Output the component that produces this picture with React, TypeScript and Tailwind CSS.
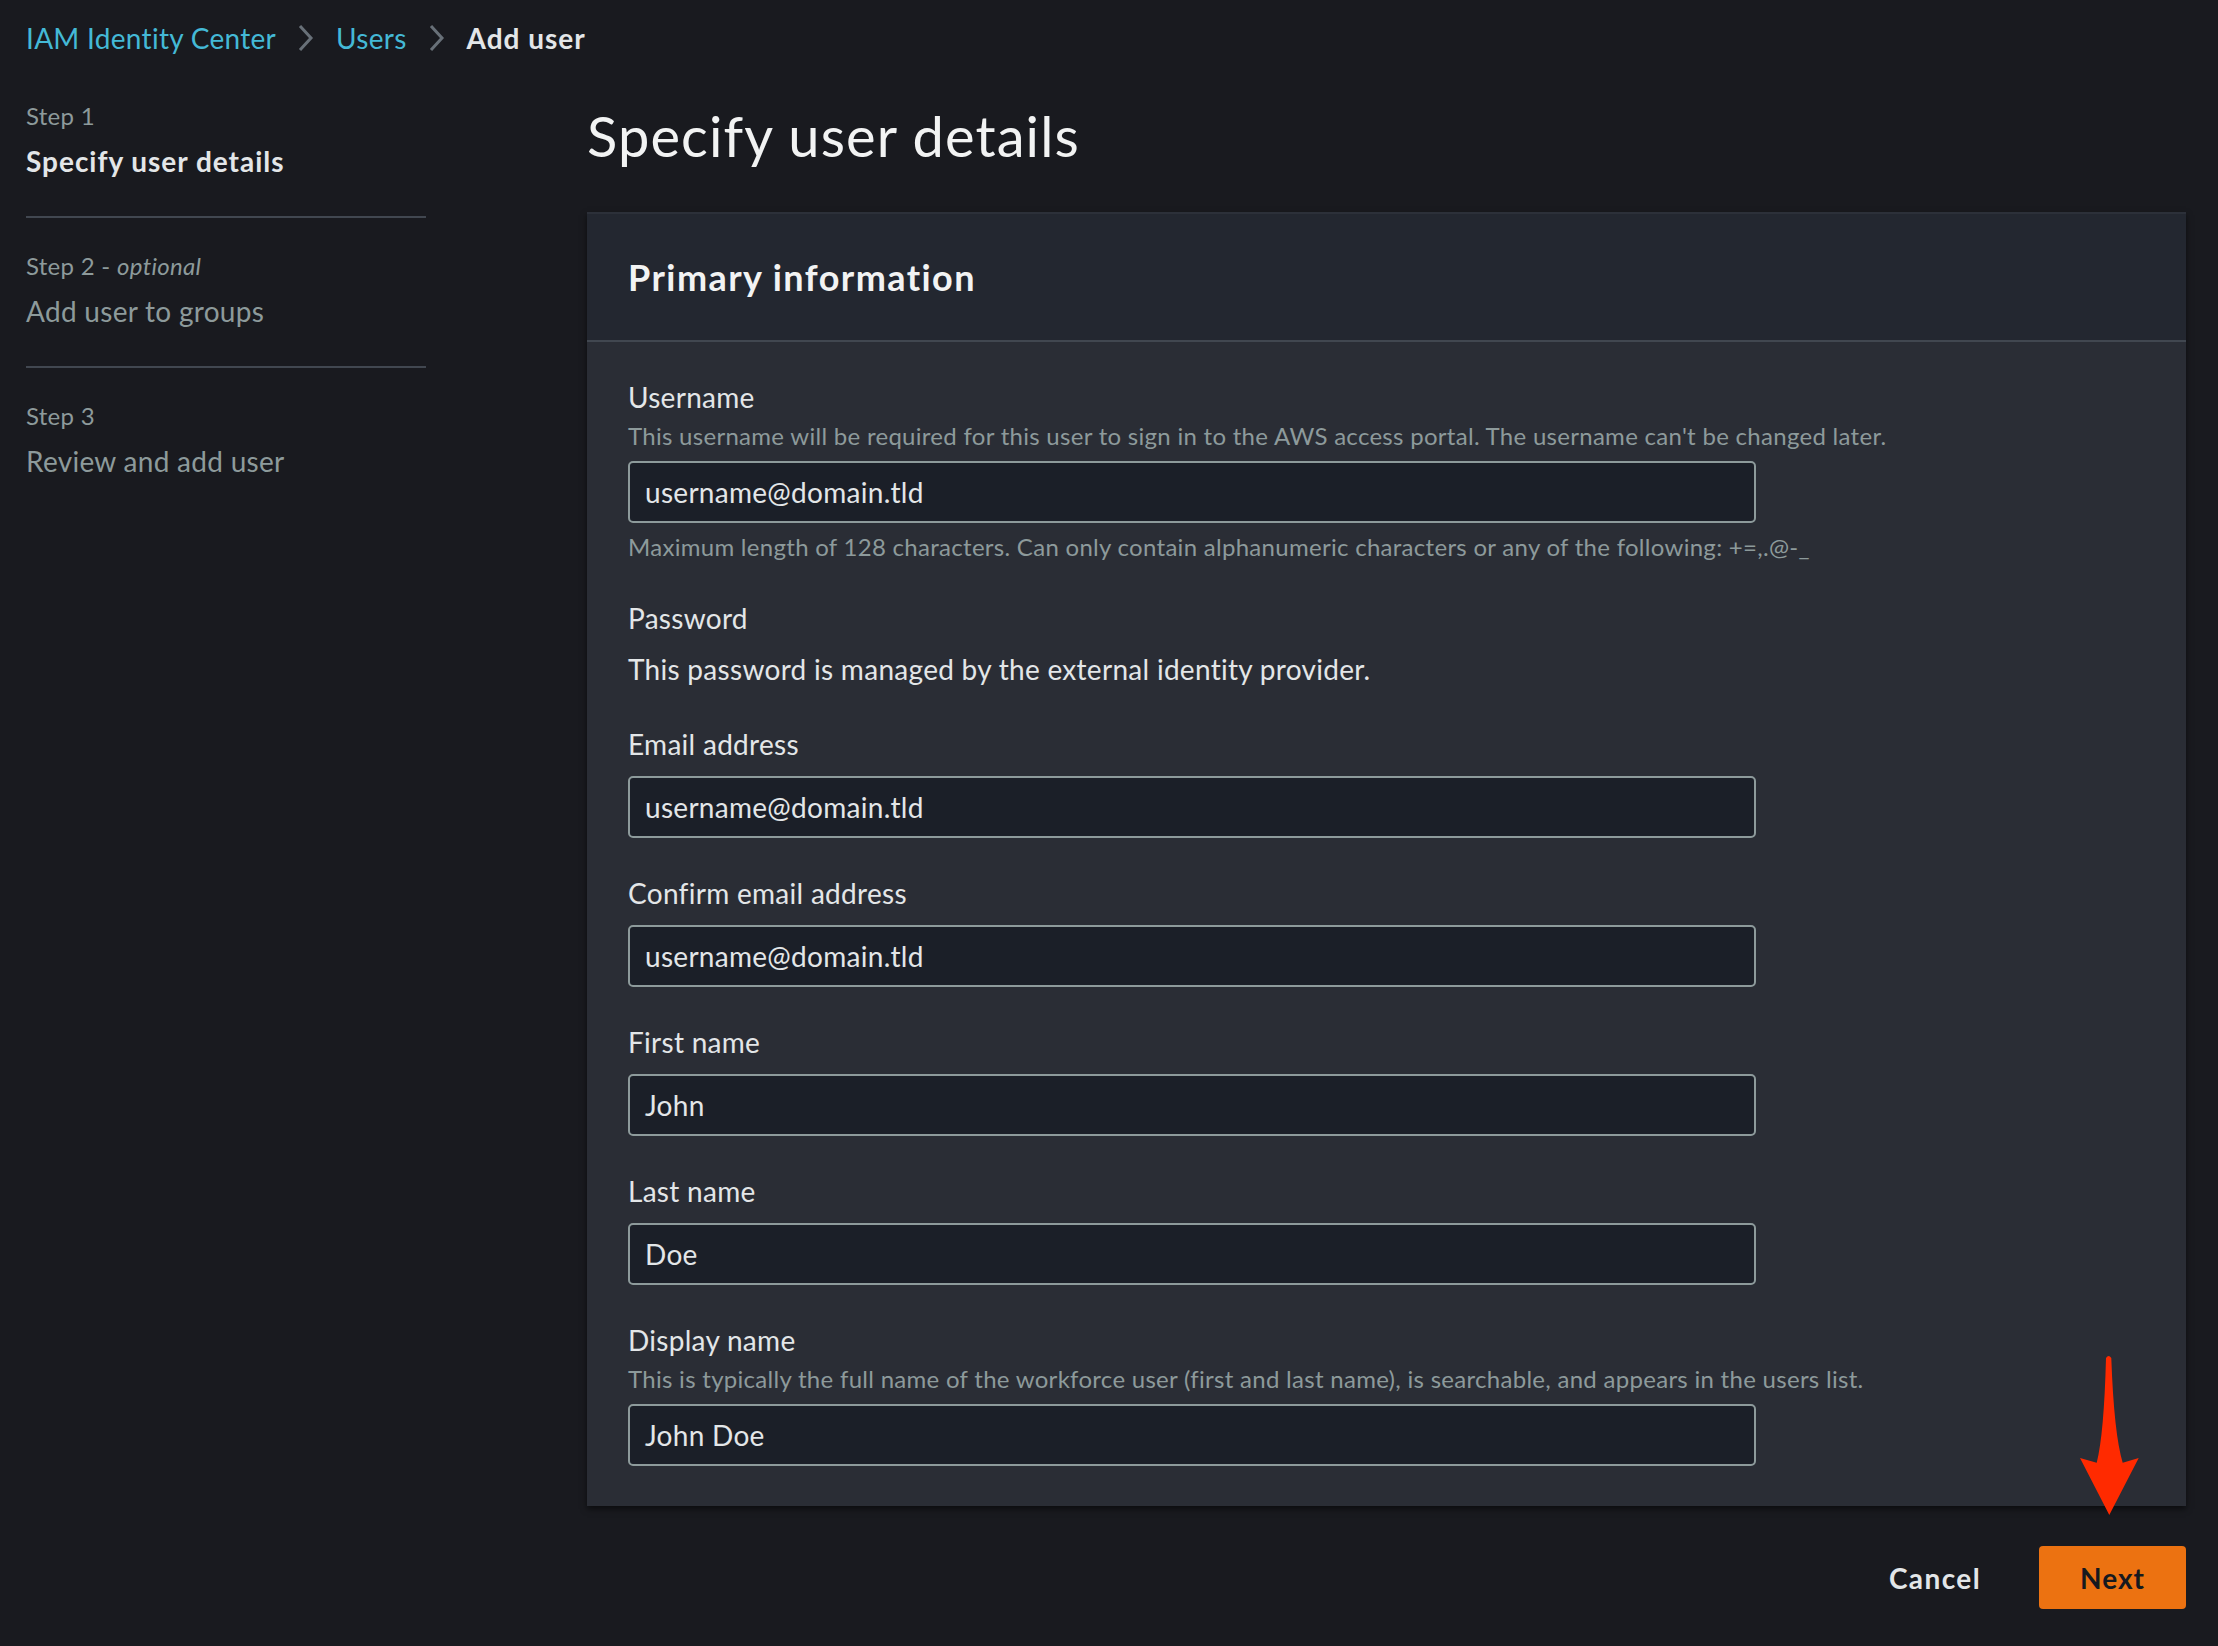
import React from "react";

const font = { fontFamily: "Lato, 'Open Sans', sans-serif" };

function Chevron() {
  return (
    <svg width="18" height="30" viewBox="0 0 18 30" aria-hidden="true" className="mx-[21px]">
      <path d="M3 3l11 12L3 27" fill="none" stroke="#687078" strokeWidth="3" />
    </svg>
  );
}

function Field({
  label,
  desc,
  value,
  hint,
}: {
  label: string;
  desc?: string;
  value: string;
  hint?: string;
}) {
  return (
    <div className="flex flex-col">
      <div className="text-[28px] leading-[40px] text-[#e3e6e8]">{label}</div>
      {desc ? (
        <div className="mt-[3px] text-[24px] leading-[32px] text-[#8d9a9b]">{desc}</div>
      ) : null}
      <div
        className={[
          "flex h-[62px] w-[1128px] items-center rounded-[5px] border-2 border-[#8d9a9b] bg-[#1b1f28] px-[15px] text-[28px] text-[#e3e6e8]",
          desc ? "mt-[9px]" : "mt-[12px]",
        ].join(" ")}
      >
        {value}
      </div>
      {hint ? (
        <div className="mt-[8px] text-[24px] leading-[32px] text-[#8d9a9b]">{hint}</div>
      ) : null}
    </div>
  );
}

export default function App() {
  return (
    <div className="relative min-h-screen bg-[#191a1f] px-[26px] tracking-[0.018em]" style={font}>
      {/* Breadcrumb */}
      <nav className="box-content flex h-[40px] items-center pt-[18px] text-[28px]" aria-label="Breadcrumb">
        <span className="text-[#44b9d6]">IAM Identity Center</span>
        <Chevron />
        <span className="text-[#44b9d6]">Users</span>
        <Chevron />
        <span className="font-bold tracking-[0.035em] text-[#e3e6e8]">Add user</span>
      </nav>

      <div className="mt-[42px] flex">
        {/* Steps */}
        <aside className="w-[400px] shrink-0">
          <div className="pb-[35px]">
            <div className="text-[24px] leading-[32px] text-[#8d9a9b]">Step 1</div>
            <div className="mt-[9px] text-[28px] font-bold leading-[40px] tracking-[0.035em] text-[#e3e6e8]">
              Specify user details
            </div>
          </div>
          <div className="h-[2px] bg-[#414750]" />
          <div className="pt-[32px] pb-[35px]">
            <div className="text-[24px] leading-[32px] text-[#8d9a9b]">
              Step 2 - <i>optional</i>
            </div>
            <div className="mt-[9px] text-[28px] leading-[40px] text-[#8d9a9b]">Add user to groups</div>
          </div>
          <div className="h-[2px] bg-[#414750]" />
          <div className="pt-[32px]">
            <div className="text-[24px] leading-[32px] text-[#8d9a9b]">Step 3</div>
            <div className="mt-[9px] text-[28px] leading-[40px] text-[#8d9a9b]">Review and add user</div>
          </div>
        </aside>

        {/* Main */}
        <main className="ml-[161px] flex-1 pr-[6px]">
          <h1 className="mt-[4px] text-[56px] leading-[64px] tracking-[0.02em] text-[#f2f3f3]">
            Specify user details
          </h1>

          <section className="mt-[44px] border-t-2 border-[#2c3039] bg-[#2a2d35] shadow-[0_3px_6px_rgba(0,0,0,0.55)]">
            <div className="flex h-[128px] items-center border-b-2 border-[#414750] bg-[#232730] px-[41px]">
              <h2 className="text-[36px] font-bold tracking-[0.04em] text-[#f2f3f3]">Primary information</h2>
            </div>
            <div className="flex flex-col gap-[35px] px-[41px] pt-[35px] pb-[40px]">
              <Field
                label="Username"
                desc="This username will be required for this user to sign in to the AWS access portal. The username can't be changed later."
                value="username@domain.tld"
                hint="Maximum length of 128 characters. Can only contain alphanumeric characters or any of the following: +=,.@-_"
              />
              <div className="flex flex-col">
                <div className="text-[28px] leading-[40px] text-[#e3e6e8]">Password</div>
                <div className="mt-[11px] text-[28px] leading-[40px] text-[#e3e6e8]">
                  This password is managed by the external identity provider.
                </div>
              </div>
              <Field label="Email address" value="username@domain.tld" />
              <Field label="Confirm email address" value="username@domain.tld" />
              <Field label="First name" value="John" />
              <Field label="Last name" value="Doe" />
              <Field
                label="Display name"
                desc="This is typically the full name of the workforce user (first and last name), is searchable, and appears in the users list."
                value="John Doe"
              />
            </div>
          </section>

          <div className="mt-[40px] flex items-center justify-end">
            <button type="button" className="px-[20px] text-[28px] font-bold tracking-[0.05em] text-[#e3e6e8]">
              Cancel
            </button>
            <button
              type="button"
              className="ml-[38px] h-[63px] w-[147px] rounded-[4px] bg-[#ec7211] text-[28px] font-bold tracking-[0.035em] text-[#16191f]"
            >
              Next
            </button>
          </div>
        </main>
      </div>

      {/* Annotation arrow */}
      <svg
        className="pointer-events-none absolute left-[2075px] top-[1352px]"
        width="70"
        height="170"
        viewBox="0 0 70 170"
        aria-hidden="true"
      >
        <path
          d="M31 6 Q33.6 2 36.3 6 Q39 82 47.7 110.7 L63.7 106 L34.3 163 L5 106 L21.7 110.7 Q29 82 31 6 Z"
          fill="#ff2a00"
        />
      </svg>
    </div>
  );
}
